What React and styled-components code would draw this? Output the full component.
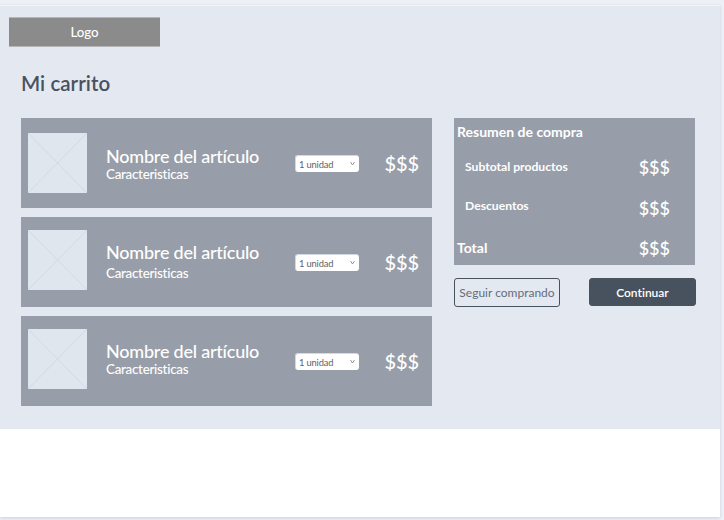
import React from "react";
import styled, { createGlobalStyle } from "styled-components";

const GlobalStyle = createGlobalStyle`
  * { box-sizing: border-box; }
  body {
    margin: 0;
    background: #fff;
    font-family: Lato, sans-serif;
    font-variant-ligatures: none;
    color: #fff;
  }
  h1, h2, h3, p { margin: 0; font-weight: 400; }
`;

const Window = styled.div`
  width: 724px;
  height: 520px;
  padding-top: 5px;
  background: #edf0f6;
  overflow: hidden;
`;

const Sheet = styled.div`
  width: 720px;
  height: 512px;
  background: #fff;
  border-top: 1px solid #f2f4f9;
  box-shadow: 0 1px 3px #c9cedb;
`;

const Page = styled.main`
  height: 423px;
  padding: 11px 0 0 21px;
  background: #e4e8f1;
`;

const Logo = styled.div`
  width: 151px;
  height: 30px;
  margin-left: -12px;
  border: solid #b5b6b9;
  border-width: 1px 0;
  background: #8b8b8b;
  font-size: 13.33px;
  font-weight: 500;
  letter-spacing: -0.1px;
  line-height: 28px;
  text-align: center;
`;

const Title = styled.h1`
  height: 71px;
  padding-top: 23px;
  font-size: 20.5px;
  font-weight: 600;
  line-height: 26px;
  letter-spacing: 0.05px;
  color: #48525e;
`;

const Columns = styled.div`
  display: grid;
  grid-template-columns: 411px 242px;
  column-gap: 22px;
  align-items: start;
`;

const Items = styled.div`
  display: flex;
  flex-direction: column;
  gap: 9px;
`;

const Card = styled.article`
  display: grid;
  grid-template-columns: 59px 208px 89.5px auto;
  height: 90px;
  padding-left: 7px;
  background: #989ea9;
`;

const Thumb = styled.svg`
  display: block;
  width: 59px;
  height: 60px;
  margin-top: ${(p) => p.$top}px;
  background: #dfe6ee;
`;

const Details = styled.div`
  padding: ${(p) => p.$top}px 0 0 19px;
  white-space: nowrap;
`;

const Name = styled.h2`
  font-size: 18px;
  font-weight: 500;
  line-height: 20px;
  letter-spacing: -0.22px;
`;

const Features = styled.p`
  margin-top: ${(p) => p.$gap}px;
  font-size: 13.33px;
  font-weight: 500;
  line-height: 14px;
  letter-spacing: -0.25px;
`;

const Quantity = styled.button`
  display: flex;
  align-items: center;
  justify-content: space-between;
  width: 64px;
  height: 17px;
  margin-top: 37px;
  padding: 2px 4px 0 3px;
  border: 1px solid #d5d9df;
  border-width: 1px 0 0 1px;
  border-radius: 3px;
  background: #fff;
  color: #5d6269;
  font: 9.33px/12px Lato, sans-serif;
  letter-spacing: -0.15px;
`;

const Chevron = styled.svg`
  width: 5px;
  height: 5px;
  margin-top: -3px;
`;

const Price = styled.strong`
  font-size: 18px;
  font-weight: 500;
  line-height: 24px;
`;

const ItemPrice = styled(Price)`
  margin-top: 33px;
  font-size: 20px;
  letter-spacing: -0.1px;
`;

const Summary = styled.section`
  width: 241px;
  height: 147px;
  padding: 6px 25px 0 3px;
  background: #989ea9;
`;

const Heading = styled.h2`
  font-size: 14px;
  font-weight: 700;
  line-height: 16px;
`;

const Line = styled.div`
  display: flex;
  justify-content: space-between;
  align-items: flex-start;
  height: ${(p) => p.$height}px;
  padding-top: 15px;
`;

const Label = styled.h3`
  margin: ${(p) => p.$top}px 0 0 8px;
  font-size: 12.15px;
  font-weight: 700;
  line-height: 14px;
`;

const TotalLabel = styled(Heading)`
  margin-top: 4px;
`;

const Actions = styled.div`
  display: flex;
  justify-content: space-between;
  margin-top: 13px;
`;

const Button = styled.button`
  width: ${(p) => (p.$primary ? 107 : 106)}px;
  height: ${(p) => (p.$primary ? 28 : 29)}px;
  padding: 0;
  border: 1px solid #48525e;
  border-radius: 3px;
  background: ${(p) => (p.$primary ? "#48525e" : "transparent")};
  color: ${(p) => (p.$primary ? "#fff" : "#656e7a")};
  font: ${(p) => (p.$primary ? "600" : "400")} 12px/27px Lato, sans-serif;
  font-variant-ligatures: none;
  white-space: nowrap;
`;

const items = [
  { thumb: 15, name: 28, gap: 1 },
  { thumb: 13, name: 25, gap: 4 },
  { thumb: 13, name: 25, gap: 1 },
];

function Item({ thumb, name, gap }) {
  return (
    <Card>
      <Thumb $top={thumb} viewBox="0 0 59 60">
        <path d="M0 0 59 60M59 0 0 60" stroke="#d1d9e5" />
      </Thumb>
      <Details $top={name}>
        <Name>Nombre del artículo</Name>
        <Features $gap={gap}>Caracteristicas</Features>
      </Details>
      <Quantity>
        1 unidad
        <Chevron viewBox="0 0 5 5">
          <path d="M.5 1 2.5 4 4.5 1" fill="none" stroke="#858a92" strokeWidth=".9" />
        </Chevron>
      </Quantity>
      <ItemPrice>$$$</ItemPrice>
    </Card>
  );
}

export default function App() {
  return (
    <Window>
      <GlobalStyle />
      <Sheet>
        <Page>
          <Logo>Logo</Logo>
          <Title>Mi carrito</Title>
          <Columns>
            <Items>
              {items.map((item, i) => (
                <Item key={i} {...item} />
              ))}
            </Items>
            <aside>
              <Summary>
                <Heading>Resumen de compra</Heading>
                <Line $height={41}>
                  <Label $top={5}>Subtotal productos</Label>
                  <Price>$$$</Price>
                </Line>
                <Line $height={40}>
                  <Label $top={3}>Descuentos</Label>
                  <Price>$$$</Price>
                </Line>
                <Line $height={40}>
                  <TotalLabel>Total</TotalLabel>
                  <Price>$$$</Price>
                </Line>
              </Summary>
              <Actions>
                <Button>Seguir comprando</Button>
                <Button $primary>Continuar</Button>
              </Actions>
            </aside>
          </Columns>
        </Page>
      </Sheet>
    </Window>
  );
}
